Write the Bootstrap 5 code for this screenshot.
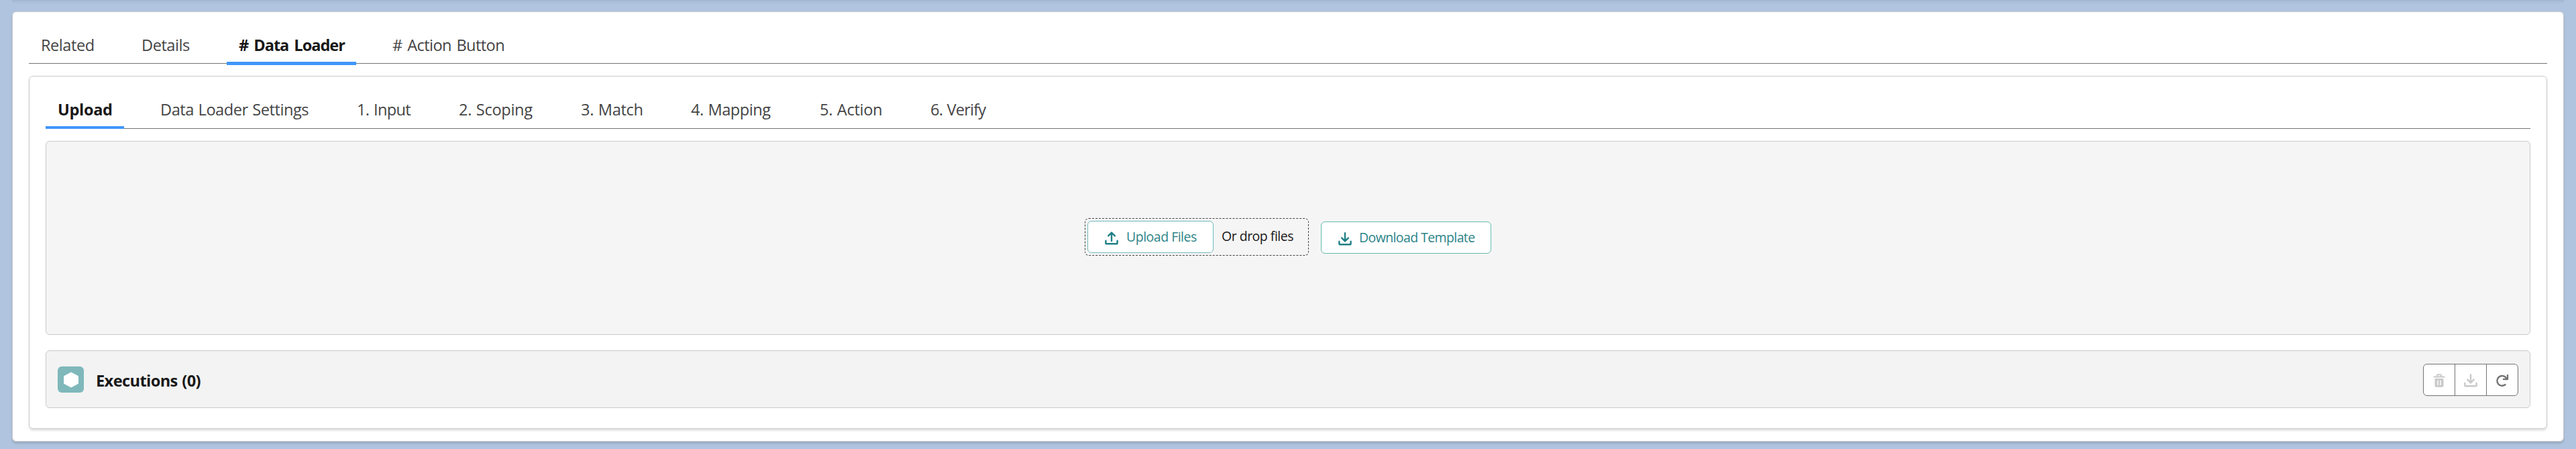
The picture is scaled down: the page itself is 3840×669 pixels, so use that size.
<!DOCTYPE html>
<html lang="en">
<head>
<meta charset="utf-8">
<meta name="viewport" content="width=device-width, initial-scale=1">
<title>Data Loader</title>
<link rel="stylesheet" href="https://cdn.jsdelivr.net/npm/bootstrap@5.3.0/dist/css/bootstrap.min.css">
<style>
  body{background:#b0c4df;font-family:"Segoe UI","Open Sans","Noto Sans",sans-serif;font-size:24px;color:#181818;overflow:hidden}
  .page{height:669px;padding:0 18px}
  .prev-card{height:1px;background:#9fb2ce;box-shadow:0 2px 3px rgba(0,0,0,.13);margin-bottom:16px;flex:none}
  .shell{height:641px;padding:25px 24px 0;border:1px solid #c9c9c9;border-radius:6px;box-shadow:0 3px 3px rgba(0,0,0,.12)}
  .panel{height:526px;margin-top:18px;padding:23px 24px 0;border:1px solid #c9c9c9;border-radius:6px;box-shadow:0 3px 3px rgba(0,0,0,.11)}
  .tabs{border:0;border-bottom:1px solid #747474;gap:37px;flex-wrap:nowrap}
  .tabs .nav-link{border:0;border-radius:0;margin:0;padding:0 0 0 18px;color:#444;font-size:23.5px;white-space:nowrap;letter-spacing:-.42px;word-spacing:1px;background:none}
  .tabs .nav-link.active{color:#181818;font-weight:700;background:none;box-shadow:inset 0 -4px #4096fa;letter-spacing:-.3px}
  .tabs-main{height:52px}
  .tabs-main .nav-link{height:54px;line-height:48px}
  .tabs-main .nav-link.active{box-shadow:inset 0 -5px #4096fa;letter-spacing:-1px;word-spacing:3px}
  .tabs-sub{height:55px}
  .tabs-sub .nav-link{height:55px;line-height:52px}
  .w-a{width:113px}.w-b{width:108px}.w-c{width:193px}.w-d{width:203px;margin-left:-1px}
  .w-e{width:117px}.w-f{width:256px;margin-left:-1px}.w-g{width:115px}.w-h{width:145px}.w-i{width:127px}.w-j{width:155px}.w-k{width:128px}.w-l{width:120px}
  .w-d .nav-link{letter-spacing:-.55px;word-spacing:2px}
  .w-g .nav-link{letter-spacing:-.6px}
  .w-h .nav-link,.w-i .nav-link,.w-k .nav-link{letter-spacing:-.28px}
  .w-l .nav-link{letter-spacing:-.75px}
  .drop-area{height:289px;margin-top:18px;background:#f5f5f5;border:1px solid #c9c9c9;border-radius:6px;padding-top:114px}
  .dropzone{width:334px;height:56px;border:1px dashed #444;border-radius:6px;padding:3px;font-size:19.5px}
  .drop-text{line-height:45px;padding-left:12px;letter-spacing:-.5px;white-space:nowrap}
  .action{height:48px;border:1px solid #74b9ba;border-radius:6px;background:#fff;color:#2c8388;font-size:19.5px;line-height:46px;padding:0 0 0 25px;letter-spacing:-.5px;white-space:nowrap}
  .action svg{margin:3px 12px 0 0;color:#1f7f86}
  .up{width:188px}
  .down{width:254px;margin-top:5px;margin-left:18px;border-color:#66bcab;letter-spacing:-.6px}
  .down svg{margin:4px 11px 0 0}
  .exec{height:86px;margin-top:23px;background:#f3f3f3;border:1px solid #c9c9c9;border-radius:6px;padding:1px 17px 0}
  .exec-icon{width:39px;height:39px;border-radius:6px;background:#7fb8bb}
  .exec-title{font-size:23.5px;font-weight:700;margin-left:18px;letter-spacing:-.55px;word-spacing:1px;padding-top:4px}
  .tools{height:48px;width:142px}
  .tools .btn{width:48px;padding:2px 0 0;background:#fff;border:1px solid #747474;border-radius:6px;color:#c9c9c9;opacity:1;display:flex;align-items:center;justify-content:center}
  .tools .btn:last-child{color:#747474}
</style>
<script src="https://cdn.jsdelivr.net/npm/bootstrap@5.3.0/dist/js/bootstrap.bundle.min.js"></script>
</head>
<body>
<svg class="d-none" xmlns="http://www.w3.org/2000/svg">
  <symbol id="tray-up" viewBox="0 0 20 20"><path d="M1.4 13.8v3.1q0 1.4 1.4 1.4h14.4q1.4 0 1.4-1.4v-3.1M10 14V2.3M5.2 6.4 10 1.6l4.8 4.8" fill="none" stroke="currentColor" stroke-width="2.4" stroke-linecap="round" stroke-linejoin="round"/></symbol>
  <symbol id="tray-down" viewBox="0 0 20 20"><path d="M1.4 13.8v3.1q0 1.4 1.4 1.4h14.4q1.4 0 1.4-1.4v-3.1M10 1.3v11.5M5.2 8.6 10 13.4l4.8-4.8" fill="none" stroke="currentColor" stroke-width="2.4" stroke-linecap="round" stroke-linejoin="round"/></symbol>
</svg>
<div class="page d-flex flex-column">
  <div class="prev-card"></div>
  <main class="shell bg-white">
    <ul class="nav nav-tabs tabs tabs-main">
      <li class="nav-item w-a"><a class="nav-link">Related</a></li>
      <li class="nav-item w-b"><a class="nav-link">Details</a></li>
      <li class="nav-item w-c"><a class="nav-link active"># Data Loader</a></li>
      <li class="nav-item w-d"><a class="nav-link"># Action Button</a></li>
    </ul>
    <section class="panel bg-white">
      <ul class="nav nav-tabs tabs tabs-sub">
        <li class="nav-item w-e"><a class="nav-link active">Upload</a></li>
        <li class="nav-item w-f"><a class="nav-link">Data Loader Settings</a></li>
        <li class="nav-item w-g"><a class="nav-link">1. Input</a></li>
        <li class="nav-item w-h"><a class="nav-link">2. Scoping</a></li>
        <li class="nav-item w-i"><a class="nav-link">3. Match</a></li>
        <li class="nav-item w-j"><a class="nav-link">4. Mapping</a></li>
        <li class="nav-item w-k"><a class="nav-link">5. Action</a></li>
        <li class="nav-item w-l"><a class="nav-link">6. Verify</a></li>
      </ul>
      <div class="drop-area d-flex justify-content-center align-items-start">
        <div class="dropzone d-flex">
          <button class="btn action up d-flex align-items-center" type="button"><svg width="20" height="20"><use href="#tray-up"/></svg>Upload Files</button>
          <span class="drop-text">Or drop files</span>
        </div>
        <button class="btn action down d-flex align-items-center" type="button"><svg width="20" height="20"><use href="#tray-down"/></svg>Download Template</button>
      </div>
      <div class="exec d-flex align-items-center">
        <span class="exec-icon d-flex align-items-center justify-content-center"><svg width="24" height="24" viewBox="0 0 24 24"><path d="M12 1 22.5 6.6v10.8L12 23 1.5 17.4V6.6Z" fill="#fff" stroke="#fff" stroke-width="1" stroke-linejoin="round"/></svg></span>
        <span class="exec-title">Executions (0)</span>
        <div class="btn-group tools ms-auto">
          <button class="btn" type="button" disabled><svg width="18" height="20" viewBox="0 0 18 20"><path d="M1.3 4.4h15.4M6 4V2.6q0-1.4 1.4-1.4h3.2Q12 1.2 12 2.6V4" fill="none" stroke="currentColor" stroke-width="2" stroke-linecap="round"/><path fill="currentColor" fill-rule="evenodd" d="M3.3 7h11.4q.8 0 .8.8V17.800q0 2-2 2h-9q-2 0-2-2V7.800q0-.8.8-.8ZM6.300 9.800v7.200h1.500V9.800ZM10.200 9.800v7.200h1.500V9.800Z"/></svg></button>
          <button class="btn" type="button" disabled><svg width="20" height="20"><use href="#tray-down"/></svg></button>
          <button class="btn" type="button"><svg width="20" height="20" viewBox="0 0 20 20"><path d="M14.600 16A7.400 7.400 0 1 1 15.400 5.500L17.500 7.500M18 2v6h-6" fill="none" stroke="currentColor" stroke-width="2.400" stroke-linecap="round" stroke-linejoin="round"/></svg></button>
        </div>
      </div>
    </section>
  </main>
</div>
</body>
</html>
